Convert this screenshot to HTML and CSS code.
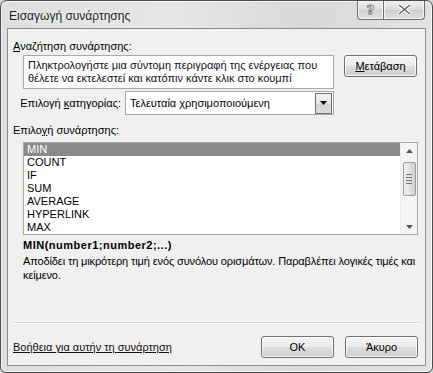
FILE: index.html
```html
<!DOCTYPE html>
<html lang="el">
<head>
    <meta charset="UTF-8">
    <title>Εισαγωγή συνάρτησης</title>
    <link rel="stylesheet" href="styles.css">
</head>
<body>
    <div class="window">
        <div class="titlebar">
            <span class="title">Εισαγωγή συνάρτησης</span>
            <div class="caption-buttons">
                <button class="cap-btn help">?</button>
                <button class="cap-btn close">
                    <svg width="13" height="11" viewBox="0 0 13 11">
                        <path d="M1 1 L12 10 M12 1 L1 10" stroke="#fff" stroke-width="3.4" stroke-linecap="square"/>
                        <path d="M1 1 L12 10 M12 1 L1 10" stroke="#666" stroke-width="1.6"/>
                    </svg>
                </button>
            </div>
        </div>

        <div class="panel">
            <div class="label"><u>Α</u>ναζήτηση συνάρτησης:</div>

            <div class="search-row">
                <div class="search-box">Πληκτρολογήστε μια σύντομη περιγραφή της ενέργειας που θέλετε να εκτελεστεί και κατόπιν κάντε κλικ στο κουμπί</div>
                <button class="btn"><u>Μ</u>ετάβαση</button>
            </div>

            <div class="category-row">
                <span class="category-label">Επιλογή <u>κ</u>ατηγορίας:</span>
                <div class="select">
                    <span class="select-value">Τελευταία χρησιμοποιούμενη</span>
                    <span class="select-arrow">
                        <svg width="7" height="4" viewBox="0 0 7 4"><path d="M0 0 H7 L3.5 4 Z" fill="#000"/></svg>
                    </span>
                </div>
            </div>

            <div class="label fn-label">Επιλο<u>γ</u>ή συνάρτησης:</div>

            <div class="listbox">
                <ul class="items">
                    <li class="selected">MIN</li>
                    <li>COUNT</li>
                    <li>IF</li>
                    <li>SUM</li>
                    <li>AVERAGE</li>
                    <li>HYPERLINK</li>
                    <li>MAX</li>
                </ul>
                <div class="scrollbar">
                    <svg class="arrow" width="7" height="4" viewBox="0 0 7 4"><path d="M0 4 H7 L3.5 0 Z" fill="#555"/></svg>
                    <div class="thumb">
                        <span></span><span></span><span></span><span></span>
                    </div>
                    <svg class="arrow down" width="7" height="4" viewBox="0 0 7 4"><path d="M0 0 H7 L3.5 4 Z" fill="#555"/></svg>
                </div>
            </div>

            <div class="syntax">MIN(number1;number2;...)</div>
            <p class="desc">Αποδίδει τη μικρότερη τιμή ενός συνόλου ορισμάτων. Παραβλέπει λογικές τιμές και κείμενο.</p>

            <div class="separator"></div>

            <div class="footer">
                <a class="help-link" href="#">Βοήθεια για αυτήν τη συνάρτηση</a>
                <button class="btn">OK</button>
                <button class="btn">Άκυρο</button>
            </div>
        </div>
    </div>
</body>
</html>
```

FILE: styles.css
```css
html, body {
    margin: 0;
    padding: 0;
    background: #d0d0d0;
}

body {
    font-family: "Liberation Sans", "DejaVu Sans", sans-serif;
    font-size: 11px;
    color: #000;
}

.window {
    width: 433px;
    height: 373px;
    box-sizing: border-box;
    border: 1px solid #4c4c4c;
    border-radius: 7px 7px 6px 6px;
    background: linear-gradient(to right, #dedede, #e6e6e6 40%, #d9d9d9 70%, #e2e2e2);
    box-shadow: inset 0 0 0 1px rgba(255, 255, 255, 0.7);
    display: flex;
    flex-direction: column;
    overflow: hidden;
}

.titlebar {
    height: 27px;
    flex: none;
    display: flex;
    justify-content: space-between;
    align-items: flex-start;
}

.title {
    font-size: 12px;
    color: #1e1e1e;
    padding: 8px 0 0 8px;
    text-shadow: 0 0 6px #fff;
}

.caption-buttons {
    display: flex;
    margin-right: 7px;
    margin-top: -1px;
}

.cap-btn {
    height: 20px;
    border: 1px solid #6e6e6e;
    border-top: none;
    background: linear-gradient(#f2f2f2, #dcdcdc 50%, #cfcfcf 51%, #e0e0e0);
    box-shadow: inset 0 0 0 1px rgba(255, 255, 255, 0.7);
    padding: 0;
    margin: 0;
    display: flex;
    align-items: center;
    justify-content: center;
}

.cap-btn.help {
    width: 27px;
    border-radius: 0 0 0 4px;
    font: bold 13px "DejaVu Sans", sans-serif;
    color: #fff;
    -webkit-text-stroke: 0.8px #666;
}

.cap-btn.close {
    width: 41px;
    border-left: none;
    border-radius: 0 0 4px 0;
}

.panel {
    flex: none;
    height: 338px;
    box-sizing: border-box;
    margin: 0 6px;
    border: 1px solid #8d8d8d;
    background: #f0f0f0;
    padding: 11px 7px 7px 5px;
    display: flex;
    flex-direction: column;
}

.label {
    line-height: 13px;
}

.search-row {
    display: flex;
    align-items: flex-start;
    margin-top: 2px;
    padding-left: 10px;
}

.search-box {
    width: 311px;
    height: 34px;
    box-sizing: border-box;
    border: 1px solid #a9a9a9;
    background: #fff;
    padding: 3px 4px 0 4px;
    line-height: 13px;
    color: #111;
}

.btn {
    width: 73px;
    height: 22px;
    margin-left: 10px;
    border: 1px solid #707070;
    border-radius: 3px;
    background: linear-gradient(#f4f4f4, #ebebeb 48%, #dddddd 52%, #cfcfcf);
    box-shadow: inset 0 0 0 1px rgba(255, 255, 255, 0.8);
    font-family: inherit;
    font-size: 11px;
    color: #000;
    padding: 0;
}

.category-row {
    display: flex;
    align-items: center;
    margin-top: 2px;
    height: 24px;
}

.category-label {
    width: 108px;
    text-align: right;
    margin-right: 4px;
}

.select {
    width: 209px;
    height: 24px;
    box-sizing: border-box;
    border: 1px solid #a9a9a9;
    background: #fff;
    display: flex;
    align-items: center;
    justify-content: space-between;
    padding: 0 1px 0 4px;
}

.select-arrow {
    width: 15px;
    height: 19px;
    border: 1px solid #707070;
    background: linear-gradient(#f2f2f2, #e6e6e6 50%, #d2d2d2 51%, #dcdcdc);
    display: flex;
    align-items: center;
    justify-content: center;
}

.fn-label {
    margin-top: 9px;
}

.listbox {
    margin: 5px 0 0 10px;
    width: 395px;
    height: 93px;
    box-sizing: border-box;
    border: 1px solid #a9a9a9;
    background: #fff;
    display: flex;
}

.items {
    list-style: none;
    margin: 0;
    padding: 0;
    flex: 1;
}

.items li {
    height: 13px;
    line-height: 13px;
    padding-left: 3px;
}

.items li.selected {
    background: #8a8a8a;
    color: #fff;
}

.scrollbar {
    width: 17px;
    background: #f4f4f4;
    border-left: 1px solid #ececec;
    display: flex;
    flex-direction: column;
    align-items: center;
    padding-top: 6px;
    box-sizing: border-box;
}

.scrollbar .arrow.down {
    margin-top: auto;
    margin-bottom: 5px;
}

.thumb {
    width: 13px;
    height: 34px;
    margin-top: 9px;
    box-sizing: border-box;
    border: 1px solid #9a9a9a;
    border-radius: 2px;
    background: linear-gradient(to right, #f0f0f0, #e2e2e2 50%, #d0d0d0);
    display: flex;
    flex-direction: column;
    align-items: center;
    justify-content: center;
    gap: 2px;
}

.thumb span {
    width: 6px;
    height: 1px;
    background: #777;
}

.syntax {
    font-weight: bold;
    line-height: 13px;
    margin-top: 4px;
    padding-left: 10px;
    letter-spacing: 0.5px;
}

/* Tahoma is narrower than Liberation Sans, squeeze a bit so the wrap matches */
.desc {
    margin: 2px 0 0 10px;
    width: 398px;
    line-height: 14px;
    letter-spacing: -0.12px;
}

.separator {
    margin: auto -3px 0 0;
    height: 1px;
    background: #d8d8d8;
    border-bottom: 1px solid #fff;
}

.footer {
    display: flex;
    align-items: center;
    margin-top: 12px;
}

.help-link {
    flex: 1;
    color: #111;
    text-decoration: underline;
}

.footer .btn {
    margin-left: 11px;
}
```
